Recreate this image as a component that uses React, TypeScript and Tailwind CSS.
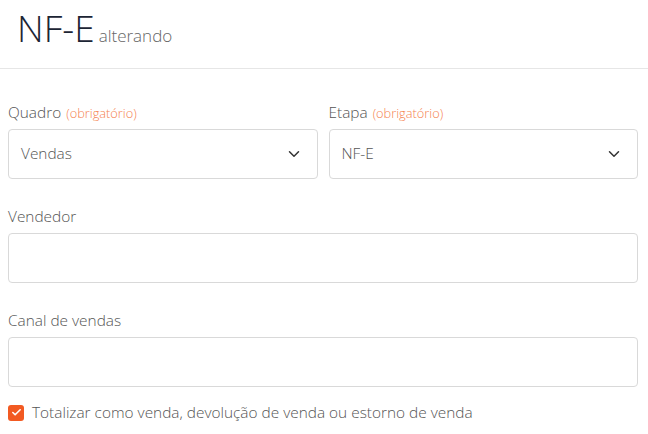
import { ChevronDown, Check } from 'lucide-react';

function Label({ text, required }: { text: string; required?: boolean }) {
  return (
    <div className="flex items-baseline gap-[5px] text-[15.4px] leading-[20px] text-[#555]">
      <span>{text}</span>
      {required && <span className="text-[12.8px] text-[#f5824f]">(obrigatório)</span>}
    </div>
  );
}

function Select({ label, value }: { label: string; value: string }) {
  return (
    <div className="flex-1 flex flex-col gap-[6px]">
      <Label text={label} required />
      <div className="h-[50px] rounded-[4px] border border-[#d9d9d9] flex items-center justify-between pl-[12px] pr-[14px] text-[15.4px] text-[#555]">
        <span>{value}</span>
        <ChevronDown size={18} strokeWidth={2} className="text-[#333]" />
      </div>
    </div>
  );
}

function Input({ label }: { label: string }) {
  return (
    <div className="flex flex-col gap-[6px]">
      <Label text={label} />
      <div className="h-[50px] rounded-[4px] border border-[#d9d9d9]" />
    </div>
  );
}

export default function App() {
  return (
    <div className="w-[648px] h-[434px] bg-white font-['Open_Sans',sans-serif] font-light overflow-hidden">
      <div className="h-[69px] border-b border-[#e6e6e6] pl-[17px] pt-[3px] flex items-baseline gap-[4px]">
        <h1 className="text-[37px] leading-[50px] text-[#1c2534]">NF-E</h1>
        <span className="text-[17px] text-[#666]">alterando</span>
      </div>
      <div className="pl-[8px] pr-[10px] pt-[34px] flex flex-col gap-[28px]">
        <div className="flex gap-[11px]">
          <Select label="Quadro" value="Vendas" />
          <Select label="Etapa" value="NF-E" />
        </div>
        <Input label="Vendedor" />
        <Input label="Canal de vendas" />
      </div>
      <div className="pl-[8px] pt-[14px] flex items-center gap-[8px] text-[15.4px] text-[#555]">
        <span className="w-[16px] h-[16px] rounded-[3px] bg-[#f25a22] flex items-center justify-center">
          <Check size={11} strokeWidth={3.5} className="text-white" />
        </span>
        <span>Totalizar como venda, devolução de venda ou estorno de venda</span>
      </div>
    </div>
  );
}
